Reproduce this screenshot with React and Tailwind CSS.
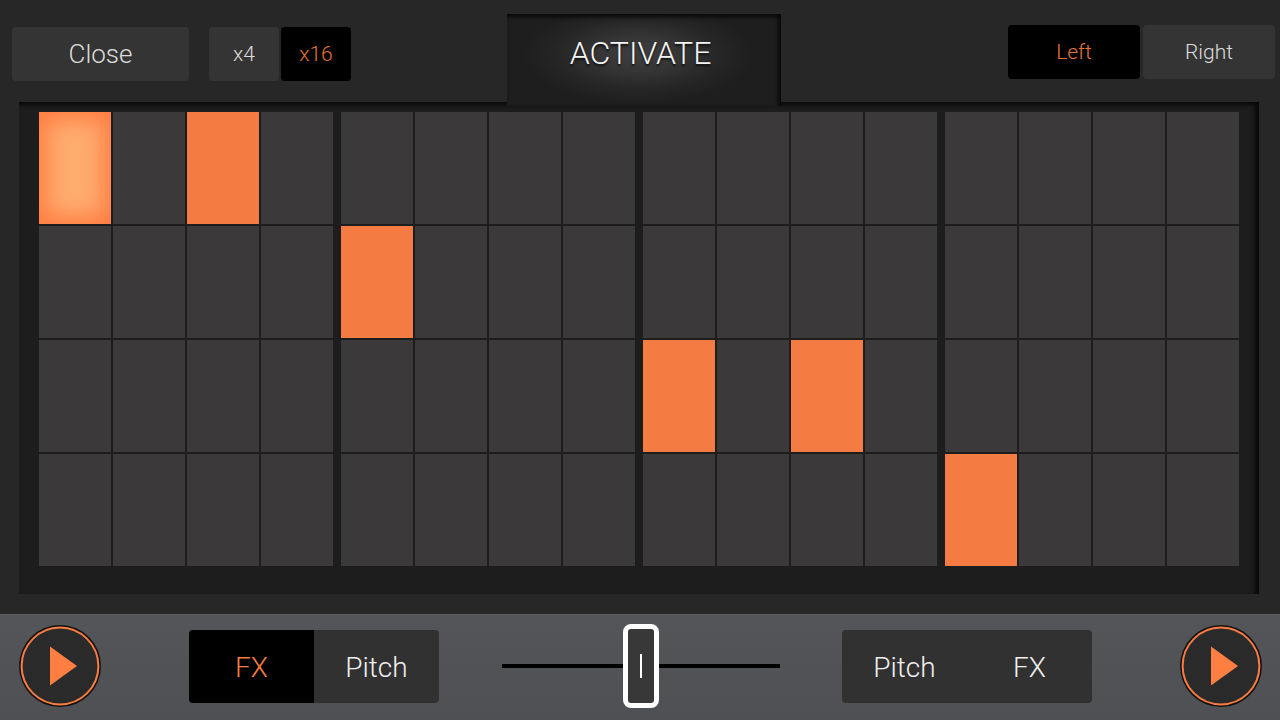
import { useState } from 'react';
import clsx from 'clsx';

const GROUPS = [0, 1, 2, 3];
const CELLS = Array.from({ length: 16 }, (_, i) => i);

// row-step keys of the pads that are switched on
const INITIAL_STEPS = ['0-0', '0-2', '1-4', '2-8', '2-10', '3-12'];
const CURRENT_STEP = 0;

const SmallButton = ({ active, className, children, ...props }) => (
  <button
    type="button"
    aria-pressed={active}
    className={clsx(
      'h-[54px] rounded-sm',
      active ? 'bg-black text-[#e8743a]' : 'bg-[#343434] text-[#dcdcdc]',
      className
    )}
    {...props}
  >
    {children}
  </button>
);

const DeckTabs = ({ tabs, active, onChange }) => (
  <div className="flex h-[73px] w-[250px] overflow-hidden rounded-sm">
    {tabs.map(tab => (
      <button
        key={tab}
        type="button"
        aria-pressed={active === tab}
        onClick={() => onChange(active === tab ? null : tab)}
        className={clsx(
          'flex-1 pt-1 text-[28px] leading-8',
          active === tab ? 'bg-black text-[#f97c42]' : 'bg-[#323132] text-[#f0f0f0]'
        )}
      >
        {tab}
      </button>
    ))}
  </div>
);

const PlayButton = ({ label }) => (
  <button type="button" aria-label={label} className="size-[82px] rounded-full">
    <svg viewBox="0 0 82 82" className="size-full">
      <circle cx="41" cy="41" r="41" fill="#15110f" />
      <circle cx="41" cy="41" r="38.4" fill="#2a2a2a" stroke="#fb7d43" strokeWidth="2" />
      <path d="M31 21.5 58 41 31 60.5Z" fill="#ff7f42" />
    </svg>
  </button>
);

const Pad = ({ row, step, on, onToggle }) => (
  <button
    type="button"
    aria-label={`Row ${row + 1}, step ${step + 1}`}
    aria-pressed={on}
    onClick={onToggle}
    className={clsx(
      'min-h-8',
      on && step === CURRENT_STEP && 'bg-[#ffac70] shadow-[inset_0_0_22px_8px_#ff7d42]',
      on && step !== CURRENT_STEP && 'bg-[#f47b42]',
      !on && 'bg-[#3b393a]'
    )}
  />
);

const App = () => {
  const [steps, setSteps] = useState(INITIAL_STEPS);
  const [rate, setRate] = useState('x16');
  const [side, setSide] = useState('Left');
  const [leftTab, setLeftTab] = useState('FX');
  const [rightTab, setRightTab] = useState(null);

  const toggleStep = key => {
    setSteps(prev => (prev.includes(key) ? prev.filter(k => k !== key) : [...prev, key]));
  };

  return (
    <div className="flex min-h-screen flex-col bg-[#272727] font-[Roboto,'Liberation_Sans',sans-serif] font-light">
      <header className="flex h-[102px] items-start pl-3 pr-[5px]">
        <div className="flex flex-1 pt-[27px]">
          <SmallButton className="mr-5 w-[177px] text-[26px] leading-8">Close</SmallButton>
          <div className="flex gap-[2px]">
            {['x4', 'x16'].map(value => (
              <SmallButton
                key={value}
                active={rate === value}
                onClick={() => setRate(value)}
                className="w-[70px] text-[21px] leading-7"
              >
                {value}
              </SmallButton>
            ))}
          </div>
        </div>

        {/* Tab runs into the panel below it */}
        <div className="relative z-10 mt-[14px] h-[92px] w-[274px] bg-[#1e1e1e] bg-[radial-gradient(ellipse_115px_50px_at_48%_40px,#3e3e3e,#353535_35%,#262626_70%,transparent)] shadow-[inset_-3px_3px_4px_#080808]">
          <button
            type="button"
            className="h-[78px] w-full pr-[6px] text-[32px] leading-9 text-[#f4f4f4] [text-shadow:0_2px_2px_#111]"
          >
            ACTIVATE
          </button>
        </div>

        <div className="flex flex-1 justify-end gap-[3px] pt-[25px]">
          {['Left', 'Right'].map(value => (
            <SmallButton
              key={value}
              active={side === value}
              onClick={() => setSide(value)}
              className="w-[132px] text-[21px] leading-7"
            >
              {value}
            </SmallButton>
          ))}
        </div>
      </header>

      <main className="mb-5 ml-[19px] mr-[21px] flex flex-1 gap-2 bg-[#1d1d1d] px-5 pb-7 pt-[10px] shadow-[inset_-4px_3px_4px_#080808]">
        {GROUPS.map(group => (
          <div key={group} className="grid flex-1 grid-cols-4 grid-rows-4 gap-[2px]">
            {CELLS.map(i => {
              const row = Math.floor(i / 4);
              const step = group * 4 + (i % 4);
              const key = `${row}-${step}`;
              return (
                <Pad
                  key={key}
                  row={row}
                  step={step}
                  on={steps.includes(key)}
                  onToggle={() => toggleStep(key)}
                />
              );
            })}
          </div>
        ))}
      </main>

      <footer className="flex h-[106px] items-center justify-between border-t border-[#5c5d5f] bg-linear-to-b from-[#545558] to-[#4f5054] pl-[19px] pr-[18px] pb-[3px]">
        <div className="flex items-center gap-[88px]">
          <PlayButton label="Play left deck" />
          <DeckTabs tabs={['FX', 'Pitch']} active={leftTab} onChange={setLeftTab} />
        </div>

        <input
          type="range"
          aria-label="Crossfader"
          defaultValue={50}
          className="h-[84px] w-[278px] appearance-none bg-transparent [&::-webkit-slider-runnable-track]:h-1 [&::-webkit-slider-runnable-track]:bg-black [&::-webkit-slider-thumb]:-mt-10 [&::-webkit-slider-thumb]:h-[84px] [&::-webkit-slider-thumb]:w-9 [&::-webkit-slider-thumb]:appearance-none [&::-webkit-slider-thumb]:rounded-lg [&::-webkit-slider-thumb]:border-[5px] [&::-webkit-slider-thumb]:border-white [&::-webkit-slider-thumb]:[background:linear-gradient(white,white)_center/2px_24px_no-repeat_#383838]"
        />

        <div className="flex items-center gap-[88px]">
          <DeckTabs tabs={['Pitch', 'FX']} active={rightTab} onChange={setRightTab} />
          <PlayButton label="Play right deck" />
        </div>
      </footer>
    </div>
  );
};

export default App;
